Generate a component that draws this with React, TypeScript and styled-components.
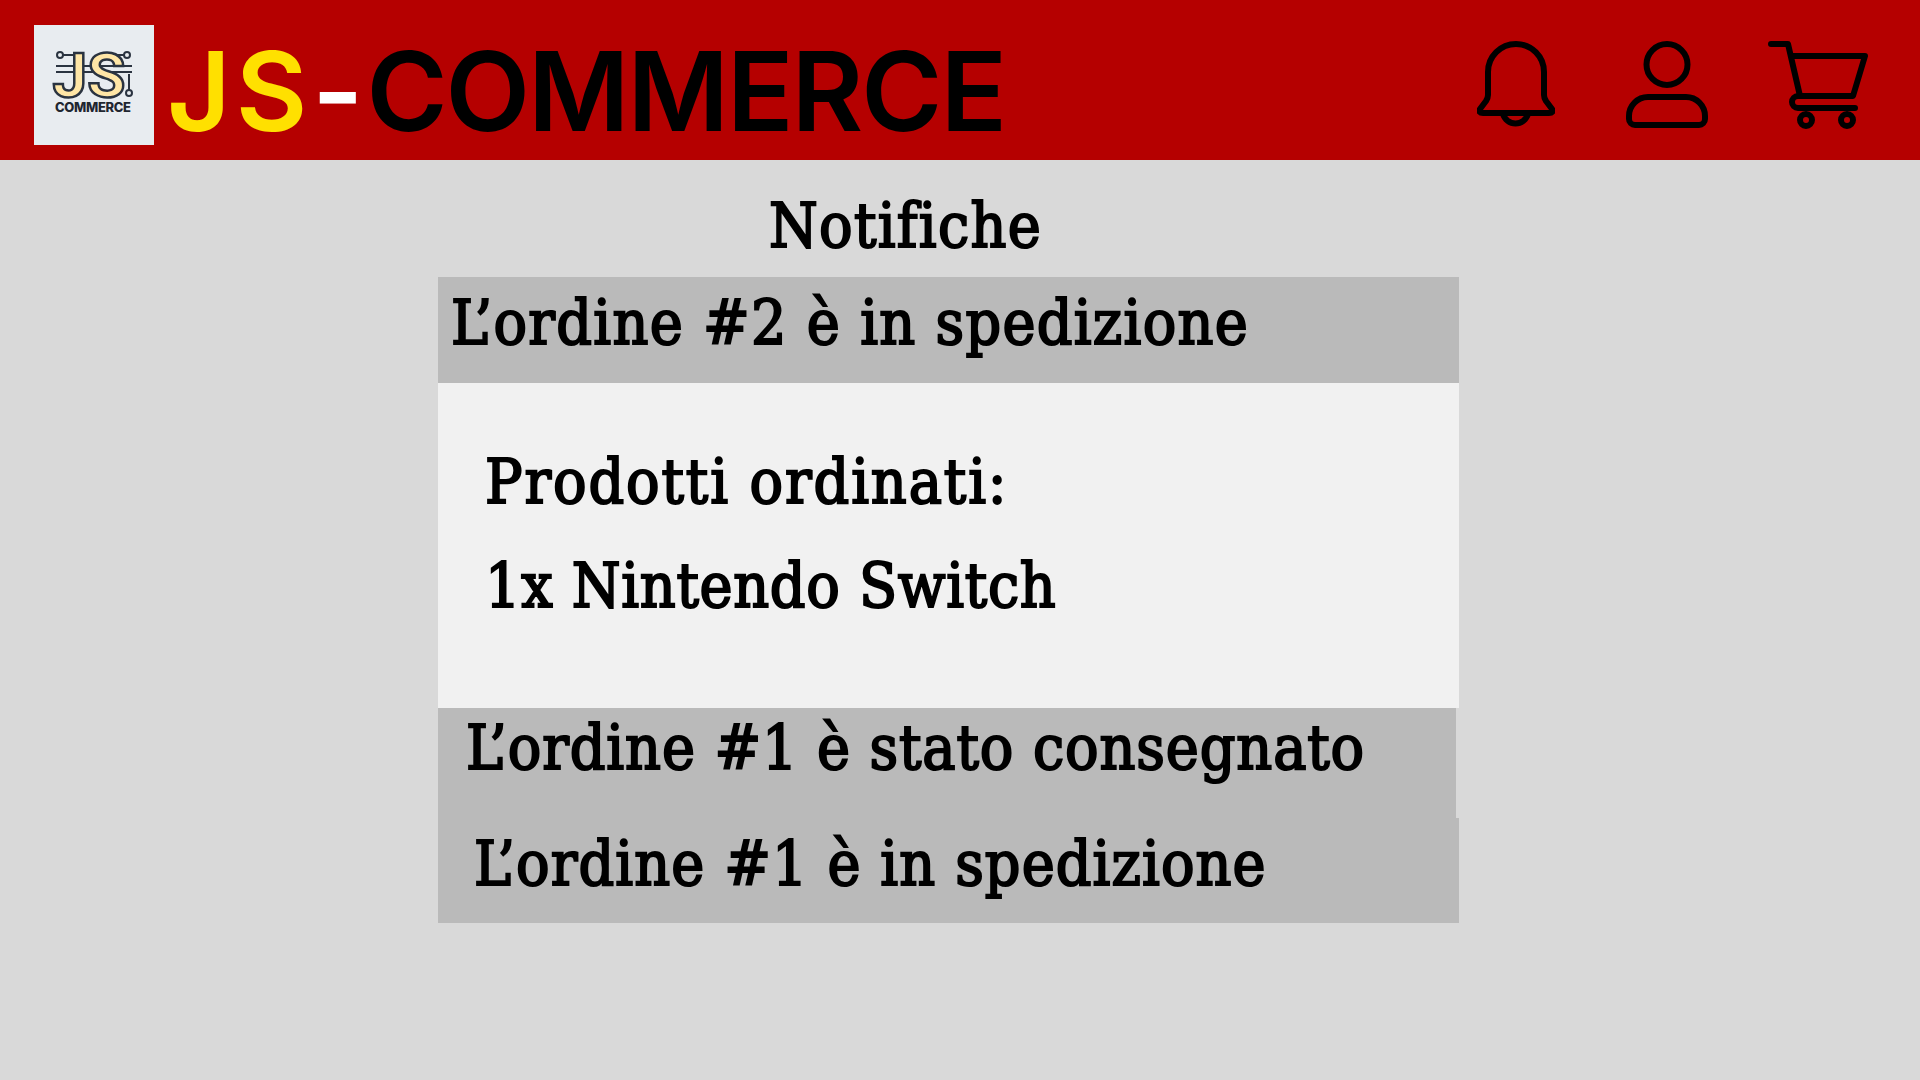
import styled, { createGlobalStyle } from 'styled-components';

const GlobalStyle = createGlobalStyle`
  html, body {
    margin: 0;
    padding: 0;
    background: #d9d9d9;
  }
`;

const Page = styled.div`
  width: 1920px;
  height: 1080px;
  overflow: hidden;
  background: #d9d9d9;
`;

const Header = styled.header`
  height: 160px;
  background: #b50000;
  display: flex;
  align-items: center;
  padding: 10px 52px 0 34px;
  box-sizing: border-box;
`;

const LogoBox = styled.div`
  width: 120px;
  height: 120px;
  flex: none;
  background: #e8ecf0;
`;

const Brand = styled.h1`
  margin: 0 0 0 13px;
  padding-top: 12px;
  font-family: 'Inter', 'Liberation Sans', sans-serif;
  font-size: 110px;
  font-weight: 600;
  line-height: 130px;
  letter-spacing: -2px;
  color: #000;
  white-space: nowrap;
  flex: 1;
`;

const Yellow = styled.span`
  color: #ffe000;
  letter-spacing: 5px;
`;

const White = styled.span`
  color: #fff;
  letter-spacing: 3px;
`;

const Icons = styled.nav`
  display: flex;
  align-items: center;
  gap: 60px;
`;

const BellSvg = styled.svg`
  margin-right: 11px;
`;

const Main = styled.main`
  width: 1021px;
  margin-left: 438px;
  font-family: 'DejaVu Serif Condensed', 'DejaVu Serif', serif;
  font-size: 62px;
  line-height: 72px;
  letter-spacing: 1.3px;
  -webkit-text-stroke: 2px #000;
  color: #000;
`;

const Title = styled.h2`
  margin: 0;
  height: 117px;
  padding: 30px 0 0 331px;
  box-sizing: border-box;
  font: inherit;
`;

const Row = styled.div<{ $h: number; $pad: number; $w?: number; $top: number; $track: number }>`
  height: ${p => p.$h}px;
  width: ${p => p.$w ?? 1021}px;
  padding: ${p => p.$top}px 0 0 ${p => p.$pad}px;
  box-sizing: border-box;
  background: #bababa;
  letter-spacing: ${p => p.$track}px;
`;

const Details = styled.div`
  height: 325px;
  background: #f1f1f1;
  padding: 63px 0 0 47px;
  box-sizing: border-box;
`;

const Line = styled.p<{ $track: number }>`
  margin: 0 0 32px;
  letter-spacing: ${p => p.$track}px;
`;

function Logo() {
  return (
    <LogoBox>
      <svg width="120" height="120" viewBox="0 0 120 120">
        <g fill="none" stroke="#2a3340" strokeWidth="2">
          <circle cx="26" cy="30" r="3" />
          <circle cx="93" cy="30" r="3" />
          <circle cx="95" cy="68" r="3" />
          <path d="M29 30H48M74 30H90M22 41H98M22 47H98M95 49V65" />
        </g>
        <text
          x="55"
          y="72"
          textAnchor="middle"
          fontFamily="'Roboto', sans-serif"
          fontSize="62"
          fontWeight="700"
          fill="#ffe6a6"
          stroke="#2a3340"
          strokeWidth="2.5"
        >
          JS
        </text>
        <text
          x="59"
          y="87"
          textAnchor="middle"
          fontFamily="'Inter', sans-serif"
          fontSize="13"
          fontWeight="800"
          fill="#1f2630"
          textLength="76"
        >
          COMMERCE
        </text>
      </svg>
    </LogoBox>
  );
}

function BellIcon() {
  return (
    <BellSvg width="78" height="88" viewBox="0 0 78 88" fill="none" stroke="#000" strokeWidth="6" strokeLinejoin="round">
      <path d="M11 54V31A28 28 0 0 1 67 31V54Q67 57 69 60L75 68Q77 72 72 72H6Q1 72 3 68L9 60Q11 57 11 54Z" />
      <path d="M26 73A13 13 0 0 0 51 73" />
    </BellSvg>
  );
}

function UserIcon() {
  return (
    <svg width="82" height="88" viewBox="0 0 82 88" fill="none" stroke="#000" strokeWidth="6">
      <circle cx="41" cy="23.5" r="20.5" />
      <path d="M22 56H60A19 19 0 0 1 79 75V78A6 6 0 0 1 73 84H9A6 6 0 0 1 3 78V75A19 19 0 0 1 22 56Z" />
    </svg>
  );
}

function CartIcon() {
  return (
    <svg width="100" height="88" viewBox="0 0 100 88" fill="none" stroke="#000" strokeWidth="6" strokeLinecap="round" strokeLinejoin="round">
      <path d="M3 3H20L32 55" />
      <path d="M24 15H97L85 55H30A6 6 0 0 0 30 67H87" />
      <circle cx="38" cy="79" r="6" />
      <circle cx="79" cy="79" r="6" />
    </svg>
  );
}

export default function App() {
  return (
    <Page>
      <GlobalStyle />
      <Header>
        <Logo />
        <Brand>
          <Yellow>JS</Yellow>
          <White>-</White>COMMERCE
        </Brand>
        <Icons>
          <BellIcon />
          <UserIcon />
          <CartIcon />
        </Icons>
      </Header>
      <Main>
        <Title>Notifiche</Title>
        <Row $h={106} $pad={13} $top={10} $track={1.3}>L’ordine #2 è in spedizione</Row>
        <Details>
          <Line $track={1.9}>Prodotti ordinati:</Line>
          <Line $track={0.7}>1x Nintendo Switch</Line>
        </Details>
        <Row $h={110} $pad={28} $w={1018} $top={4} $track={0.9}>L’ordine #1 è stato consegnato</Row>
        <Row $h={105} $pad={36} $top={10} $track={1.1}>L’ordine #1 è in spedizione</Row>
      </Main>
    </Page>
  );
}
